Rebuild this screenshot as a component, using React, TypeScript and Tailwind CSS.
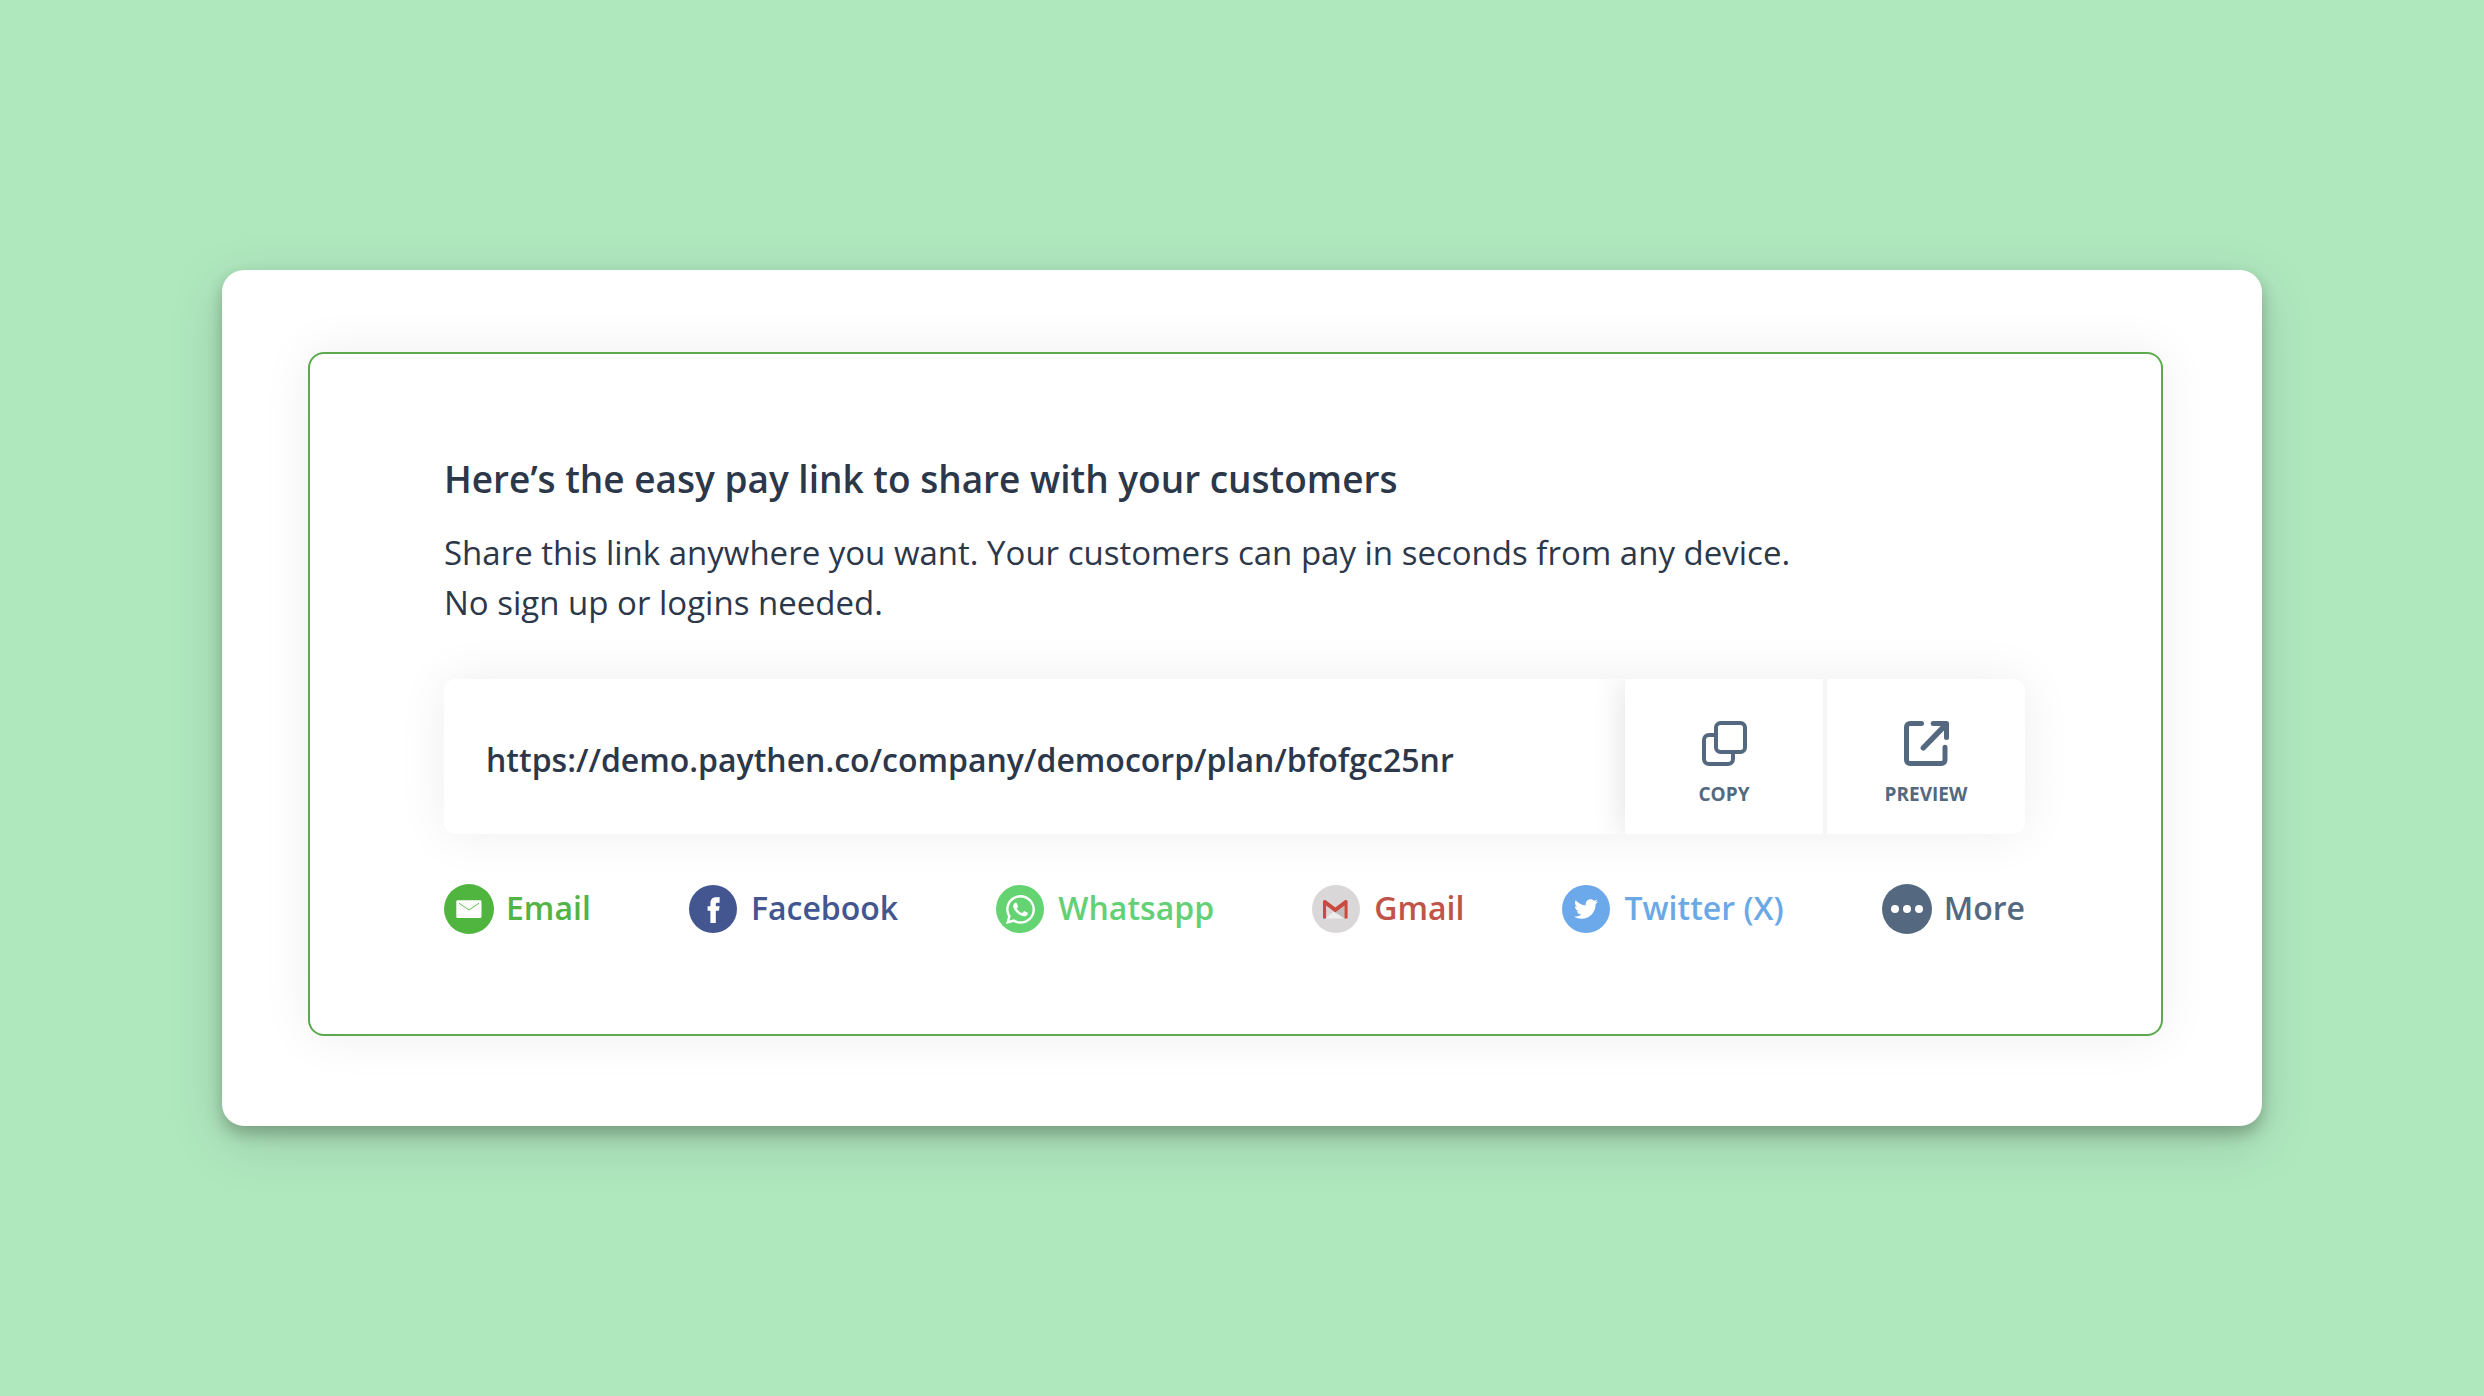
import type { ReactNode } from "react";
import { FaTwitter, FaWhatsapp } from "react-icons/fa";

const PAY_LINK = "https://demo.paythen.co/company/democorp/plan/bfofgc25nr";

function CopyIcon() {
  return (
    <svg viewBox="0 0 45 45" className="size-[45px]" fill="none" stroke="currentColor" strokeWidth="4" aria-hidden="true">
      <rect x="14" y="2" width="29" height="29" rx="4.5" />
      <path d="M13 14H7a5 5 0 0 0-5 5v19a5 5 0 0 0 5 5h19a5 5 0 0 0 5-5v-6" />
    </svg>
  );
}

function PreviewIcon() {
  return (
    <svg viewBox="0 0 45 45" className="size-[45px]" fill="none" stroke="currentColor" strokeLinecap="round" strokeLinejoin="round" aria-hidden="true">
      <path d="M17.5 2.5H6a3.5 3.5 0 0 0-3.5 3.5v33A3.5 3.5 0 0 0 6 42.5h31.5A3.5 3.5 0 0 0 41 39V26.2" strokeWidth="5" />
      <path d="M29.2 2.5h13.3v14" strokeWidth="5" />
      <path d="M19.3 26.8L41 4.5" strokeWidth="5.4" />
    </svg>
  );
}

function EmailIcon() {
  return (
    <svg viewBox="0 0 50 50" className="size-[50px]" aria-hidden="true">
      <circle cx="25" cy="25" r="25" fill="#50b53f" />
      <rect x="12.3" y="16.3" width="25.2" height="17.8" rx="1.4" fill="#fff" />
      <path d="M15 19.2l10 6.8 10-6.8" fill="none" stroke="#50b53f" strokeWidth="0.9" />
    </svg>
  );
}

function FacebookIcon() {
  return (
    <svg viewBox="0 0 48 48" className="size-[48px]" aria-hidden="true">
      <circle cx="24" cy="24" r="24" fill="#43568f" />
      <path
        d="M30.6 12v5.8h-2.2c-1.2 0-1.6.7-1.6 1.6v1.8h3.8l-.7 4.6h-3.1V38h-5.4V25.8h-2.8v-4.600h2.800v-2.900c0-4 2.200-6.100 5.600-6.100 1.400 0 2.300-.1 3.600-.2z"
        fill="#fff"
      />
    </svg>
  );
}

function WhatsappIcon() {
  return (
    <span className="flex size-[48px] items-center justify-center rounded-full bg-[#64d371] text-white">
      <FaWhatsapp className="size-[33px]" aria-hidden="true" />
    </span>
  );
}

function GmailIcon() {
  return (
    <svg viewBox="0 0 48 48" className="size-[48px]" aria-hidden="true">
      <circle cx="24" cy="24" r="24" fill="#d9d7d7" />
      <path d="M13.5 33.5L23.3 25.5 33 33.5z" fill="#efeeee" />
      <path d="M23.300 27.500L32.500 20v13.500z" fill="#bfbdbd" />
      <path d="M11 33.500V16.600c0-1.600 1.600-2.200 2.800-1.300l9.500 7.200 9.500-7.200c1.200-.9 2.800-.3 2.800 1.300v16.900h-3.100V20.400l-9.200 7.100-9.200-7.100v13.100z" fill="#cb4a3f" />
    </svg>
  );
}

function TwitterIcon() {
  return (
    <span className="flex size-[48px] items-center justify-center rounded-full bg-[#6ba9ea] text-white">
      <FaTwitter className="size-[24px]" aria-hidden="true" />
    </span>
  );
}

function MoreIcon() {
  return (
    <svg viewBox="0 0 50 50" className="size-[50px]" aria-hidden="true">
      <circle cx="25" cy="25" r="25" fill="#54697f" />
      <circle cx="13" cy="25" r="4" fill="#fff" />
      <circle cx="25" cy="25" r="4" fill="#fff" />
      <circle cx="37" cy="25" r="4" fill="#fff" />
    </svg>
  );
}

const CHANNELS: { label: string; style: string; icon: ReactNode }[] = [
  { label: "Email", style: "gap-[12px] text-[#54b345]", icon: <EmailIcon /> },
  { label: "Facebook", style: "gap-[14px] text-[#43568f]", icon: <FacebookIcon /> },
  { label: "Whatsapp", style: "gap-[14px] text-[#64d075]", icon: <WhatsappIcon /> },
  { label: "Gmail", style: "gap-[14px] text-[#c05448]", icon: <GmailIcon /> },
  { label: "Twitter (X)", style: "gap-[14px] text-[#6ba9e6]", icon: <TwitterIcon /> },
];

function LinkAction({ label, icon }: { label: string; icon: ReactNode }) {
  return (
    <button type="button" className="flex w-[198px] cursor-pointer flex-col items-center gap-[16px] bg-white pt-[42px] text-[#54697f]">
      {icon}
      <span className="text-[19px] leading-[24px] font-bold">{label}</span>
    </button>
  );
}

export default function App() {
  return (
    <main className="flex min-h-screen items-center justify-center bg-[#b0e8be] px-8 font-['Open_Sans',sans-serif] text-[#2c374a]">
      <div className="w-full max-w-[2040px] rounded-[22px] bg-white pt-[82px] pr-[99px] pb-[90px] pl-[86px] shadow-[0_8px_16px_rgba(0,0,0,0.24),0_16px_56px_rgba(0,0,0,0.14)]">
        <section className="rounded-[16px] border-2 border-[#5bab4e] bg-white pt-[100px] pr-[136px] pb-[100px] pl-[134px] shadow-[0_0_50px_rgba(30,30,50,0.07)]">
          <h1 className="text-[37px] leading-[50px] font-semibold">Here’s the easy pay link to share with your customers</h1>
          <p className="mt-[24px] text-[33px] leading-[50px]">
            Share this link anywhere you want. Your customers can pay in seconds from any device.
            <br />
            No sign up or logins needed.
          </p>

          <div className="mt-[51px] rounded-[12px] shadow-[0_0_50px_rgba(0,0,0,0.07)]">
            <div className="flex h-[155px] overflow-hidden rounded-[12px] bg-white">
              <input
                type="text"
                readOnly
                aria-label="Pay link"
                value={PAY_LINK}
                className="min-w-0 flex-1 bg-white pt-[6px] pl-[42px] text-[32px] font-semibold outline-none"
              />
              <div className="flex gap-[4px] bg-[#f3f5f7] shadow-[-4px_0_28px_rgba(0,0,0,0.10)]">
                <LinkAction label="COPY" icon={<CopyIcon />} />
                <LinkAction label="PREVIEW" icon={<PreviewIcon />} />
              </div>
            </div>
          </div>

          <nav aria-label="Share" className="mt-[50px] flex h-[50px] items-center justify-between text-[32px] leading-[46px] font-semibold">
            {CHANNELS.map(({ label, style, icon }) => (
              <a key={label} href="#" className={`flex items-center ${style}`}>
                {icon}
                <span className="pb-[2px]">{label}</span>
              </a>
            ))}
            <button type="button" className="flex cursor-pointer items-center gap-[12px] text-[#54697f]">
              <MoreIcon />
              <span className="pb-[2px]">More</span>
            </button>
          </nav>
        </section>
      </div>
    </main>
  );
}
